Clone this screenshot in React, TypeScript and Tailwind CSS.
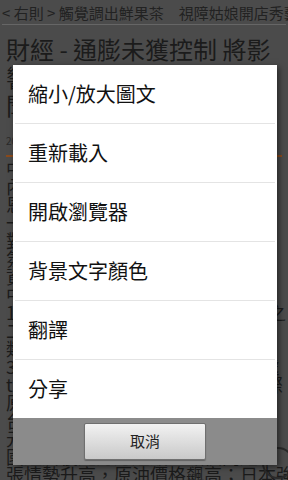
const cjk = { fontFamily: '"Noto Sans CJK TC", "Noto Sans", sans-serif' };

const menuItems = ["縮小/放大圖文", "重新載入", "開啟瀏覽器", "背景文字顏色", "翻譯", "分享"];

const bodyLines = [
  "中東局勢持續緊張，國際油價上漲",
  "內需物價壓力升溫，央行密切關注",
  "恩格爾係數上升，民眾生活負擔加",
  "一般家庭開支明顯增加，消費信心",
  "對經濟前景看法保守，市場觀望氣",
  "氛濃厚，股市成交量持續萎縮，外",
  "資賣超金額擴大，新台幣匯率走貶",
  "中長期而言，通膨壓力將持續存在",
  "1月消費者物價指數年增率達百分之",
  "二點五，創下近年新高，其中食物",
  "類價格上漲幅度最為明顯，交通及",
  "3C產品價格則相對平穩，主計總處",
  "t表示，未來物價走勢仍需觀察國際",
  "原物料價格變化，並將適時調整預",
  "台灣經濟研究院指出，今年經濟成",
  "元月份出口表現不如預期，加上美",
  "國經濟復甦力道趨緩，歐債問題未",
  "張情勢升高，原油價格飆高；日本強",
];

export default function App() {
  return (
    <div className="relative h-[480px] w-[288px] overflow-hidden bg-[#4b4b4b] text-[#1b1b1b]" style={cjk}>
      {/* dimmed article page */}
      <div className="flex h-[24px] items-center whitespace-nowrap pl-[2px] text-[15px] leading-none text-[#222]">
        &lt; 右則 &gt; 觸覺調出鮮果茶　視障姑娘開店秀藝
      </div>
      <div className="mx-[2px] h-px bg-[#666]" />
      <div className="px-[6px] pt-[10px]">
        <div className="whitespace-nowrap text-[24px] leading-[28px]">
          <div>財經 - 通膨未獲控制 將影</div>
          <div>響全球經濟復甦腳步</div>
          <div>聞訊</div>
        </div>
        <div className="mt-[16px] text-[10px] leading-[12px] text-[#2a2a2a]">2012-02-24 10:35</div>
        <div className="mt-[8px] h-[2px] bg-[#8a4a1c]" />
        <div className="mt-[2px] whitespace-nowrap text-[18px] leading-[18px]">
          {bodyLines.map((line) => (
            <div key={line}>{line}</div>
          ))}
        </div>
      </div>
      <div className="absolute left-[262px] top-[447px] h-[32px] w-[32px] rounded-full border-2 border-[#2a2a2a]" />

      {/* options dialog */}
      <div className="absolute left-[13px] top-[65px] w-[264px] shadow-[2px_2px_6px_rgba(0,0,0,0.5)]">
        <div className="bg-white">
          {menuItems.map((item, i) => (
            <div key={item}>
              {i > 0 && <div className="mx-[2px] h-px bg-[#e4e4e4]" />}
              <div className="flex h-[58px] items-center pl-[15px] text-[20px] text-[#111]">{item}</div>
            </div>
          ))}
        </div>
        <div className="flex h-[47px] items-center justify-center bg-[#8b8b8b]">
          <button className="h-[37px] w-[122px] rounded-[2px] border border-[#6f6f6f] bg-gradient-to-b from-[#f2f2f2] to-[#c9c9c9] text-[15px] text-[#222] shadow-[0_1px_1px_rgba(0,0,0,0.3)]">
            取消
          </button>
        </div>
      </div>
    </div>
  );
}
